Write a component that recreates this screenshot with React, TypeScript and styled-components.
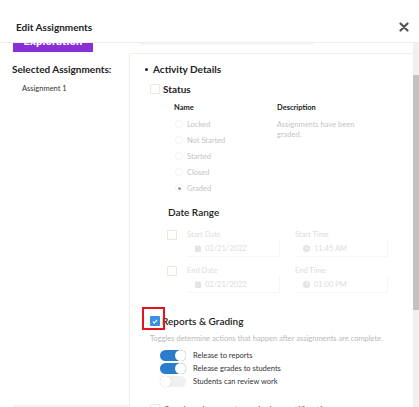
import React from "react";
import styled, { createGlobalStyle } from "styled-components";

const Global = createGlobalStyle`
  html, body { margin: 0; padding: 0; background: #fff; }
  body { font-family: Lato, "Noto Sans", sans-serif; color: #222; }
  * { box-sizing: border-box; }
`;

const Modal = styled.div`
  width: 419px;
  height: 407px;
  display: flex;
  flex-direction: column;
  overflow: hidden;
  background: #fff;
`;

const Header = styled.div`
  height: 43px;
  flex: none;
  display: flex;
  align-items: center;
  justify-content: space-between;
  padding: 0 10px 0 16px;
  border-bottom: 1px solid #f0eee8;
`;

const Title = styled.div`
  font-size: 10px;
  font-weight: 700;
  color: #222;
  padding-top: 12px;
`;

const Close = styled.div`
  width: 10px;
  height: 10px;
  margin-top: 12px;
  display: flex;
`;

const Body = styled.div`
  flex: 1;
  min-height: 0;
  display: flex;
`;

const Main = styled.div`
  flex: 1;
  display: flex;
  flex-direction: column;
  min-width: 0;
`;

const Strip = styled.div`
  height: 10px;
  flex: none;
  display: flex;
  align-items: flex-start;
  gap: 47px;
`;

const Tag = styled.div`
  margin-left: 13px;
  width: 80px;
  height: 9px;
  background: #8a2fd6;
  overflow: hidden;
  display: flex;
  justify-content: center;
`;

const TagText = styled.span`
  color: #fff;
  font-size: 11px;
  font-weight: 900;
  line-height: 11px;
  margin-top: -8px;
  letter-spacing: 0.2px;
`;

const FaintBar = styled.div`
  width: 173px;
  height: 2px;
  background: #f4f4f4;
`;

const Columns = styled.div`
  flex: 1;
  display: flex;
  min-height: 0;
`;

const Left = styled.div`
  width: 130px;
  flex: none;
  display: flex;
  flex-direction: column;
  border-right: 1px solid #f1eee6;
  padding: 10px 0 0 12px;
`;

const SideTitle = styled.div`
  font-size: 10px;
  font-weight: 700;
  color: #222;
`;

const SideItem = styled.div`
  font-size: 7.5px;
  color: #333;
  margin: 9px 0 0 10px;
`;

const Spacer = styled.div`
  flex: 1;
`;

const Rule = styled.div`
  height: 2px;
  background: #f2f2f2;
  margin-left: 1px;
`;

const Right = styled.div`
  flex: 1;
  border-top: 1px solid #f1eee6;
  padding: 8px 0 0 15px;
  display: flex;
  flex-direction: column;
  overflow: hidden;
  & > * {
    flex-shrink: 0;
  }
`;

const Bullet = styled.div`
  display: flex;
  align-items: center;
  gap: 5px;
  font-size: 10px;
  font-weight: 700;
  height: 14px;
  &::before {
    content: "";
    width: 3px;
    height: 3px;
    border-radius: 50%;
    background: #222;
  }
`;

const CheckRow = styled.div<{ $indent: number; $top: number }>`
  display: flex;
  align-items: center;
  gap: 3px;
  margin: ${(p) => p.$top}px 0 0 ${(p) => p.$indent}px;
  height: 14px;
  font-size: 10px;
  font-weight: 700;
`;

const Box = styled.div`
  width: 10px;
  height: 10px;
  border: 1px solid #ece9dd;
  border-radius: 1px;
  flex: none;
  background: #fff;
`;

const Grid = styled.div`
  display: grid;
  grid-template-columns: 103px 1fr;
  margin: 4px 0 0 29px;
`;

const ColHead = styled.div`
  font-size: 7.5px;
  font-weight: 700;
  color: #222;
  height: 14px;
  display: flex;
  align-items: center;
`;

const RadioList = styled.div`
  display: flex;
  flex-direction: column;
  margin-top: 2px;
`;

const RadioRow = styled.div`
  height: 16px;
  display: flex;
  align-items: center;
  gap: 4px;
  font-size: 7.5px;
  color: #c4c4c4;
`;

const Radio = styled.div<{ $on?: boolean }>`
  width: 8px;
  height: 8px;
  border-radius: 50%;
  border: 1px solid #f3f3f3;
  margin-left: 1px;
  display: flex;
  align-items: center;
  justify-content: center;
  &::after {
    content: "";
    width: 3px;
    height: 3px;
    border-radius: 50%;
    background: ${(p) => (p.$on ? "#999" : "transparent")};
  }
`;

const Desc = styled.div`
  font-size: 7.5px;
  color: #c4c4c4;
  line-height: 10px;
  margin-top: 6px;
  width: 90px;
`;

const SubHead = styled.div`
  font-size: 10px;
  font-weight: 600;
  color: #222;
  margin: 9px 0 0 23px;
  height: 14px;
  display: flex;
  align-items: center;
`;

const DateRow = styled.div<{ $top: number }>`
  display: flex;
  align-items: flex-start;
  margin: ${(p) => p.$top}px 0 0 22px;
`;

const DateBox = styled(Box)`
  margin-top: 1px;
  border-color: #ece8d6;
`;

const Field = styled.div<{ $w: number; $gap: number }>`
  width: ${(p) => p.$w}px;
  margin-left: ${(p) => p.$gap}px;
  display: flex;
  flex-direction: column;
`;

const FieldLabel = styled.div`
  font-size: 7.5px;
  color: #dcdcdc;
  height: 10px;
  display: flex;
  align-items: center;
`;

const Input = styled.div`
  height: 17px;
  margin-top: 1px;
  border-bottom: 1px solid #f6f6f6;
  border-right: 1px solid #f6f6f6;
  display: flex;
  align-items: center;
  gap: 4px;
  padding-left: 8px;
  font-size: 7.5px;
  color: #dcdcdc;
`;

const ReportsRow = styled.div`
  position: relative;
  display: flex;
  align-items: center;
  gap: 2px;
  margin: 21px 0 0 5px;
  height: 14px;
  font-size: 10px;
  font-weight: 600;
  color: #222;
`;

const BlueBox = styled.div`
  width: 10px;
  height: 10px;
  border-radius: 1px;
  background: #3b8fe4;
  display: flex;
  align-items: center;
  justify-content: center;
  flex: none;
`;

const Highlight = styled.div`
  position: absolute;
  left: -8px;
  top: -7px;
  width: 23px;
  height: 23px;
  border: 2px solid #e3141c;
`;

const Hint = styled.div`
  font-size: 7.5px;
  color: #b9b9b9;
  margin: 3px 0 0 5px;
  height: 14px;
  display: flex;
  align-items: center;
`;

const ToggleList = styled.div`
  display: flex;
  flex-direction: column;
  margin: 4px 0 0 15px;
`;

const ToggleRow = styled.div`
  height: 13px;
  display: flex;
  align-items: center;
  gap: 7px;
  font-size: 7.5px;
  color: #333;
`;

const Track = styled.div<{ $on: boolean }>`
  width: 26px;
  height: 11px;
  border-radius: 6px;
  background: ${(p) => (p.$on ? "#2a7ccc" : "#f0f0f0")};
  display: flex;
  align-items: center;
  justify-content: ${(p) => (p.$on ? "flex-end" : "flex-start")};
  &::after {
    content: "";
    width: 11px;
    height: 11px;
    border-radius: 50%;
    background: #fff;
    box-shadow: 0 0 1px rgba(0, 0, 0, 0.25);
  }
`;

const CutRow = styled.div`
  display: flex;
  align-items: center;
  gap: 4px;
  margin: 14px 0 0 5px;
  height: 14px;
  font-size: 10px;
  font-weight: 600;
  color: #777;
`;

const Scroll = styled.div`
  width: 6px;
  flex: none;
  background: #f1f1f1;
  display: flex;
  flex-direction: column;
`;

const Thumb = styled.div`
  margin-top: 32px;
  height: 235px;
  background: #c2c2c2;
`;

const Calendar = () => (
  <svg width="6" height="7" viewBox="0 0 6 7">
    <rect x="0" y="1" width="6" height="6" rx="0.5" fill="#e4e4e4" />
    <rect x="1" y="0" width="1" height="2" fill="#e4e4e4" />
    <rect x="4" y="0" width="1" height="2" fill="#e4e4e4" />
  </svg>
);

const Clock = () => (
  <svg width="7" height="7" viewBox="0 0 7 7">
    <circle cx="3.5" cy="3.5" r="3.5" fill="#e4e4e4" />
    <path d="M3.5 1.6V3.6H5" stroke="#fff" strokeWidth="0.8" fill="none" />
  </svg>
);

const statuses = ["Locked", "Not Started", "Started", "Closed", "Graded"];
const toggles: [string, boolean][] = [
  ["Release to reports", true],
  ["Release grades to students", true],
  ["Students can review work", false],
];

export default function App() {
  return (
    <Modal>
      <Global />
      <Header>
        <Title>Edit Assignments</Title>
        <Close>
          <svg width="10" height="10" viewBox="0 0 10 10">
            <path d="M1.5 1.5L8.5 8.5M8.5 1.5L1.5 8.5" stroke="#555" strokeWidth="2.2" strokeLinecap="round" />
          </svg>
        </Close>
      </Header>
      <Body>
        <Main>
          <Strip>
            <Tag>
              <TagText>Exploration</TagText>
            </Tag>
            <FaintBar />
          </Strip>
          <Columns>
            <Left>
              <SideTitle>Selected Assignments:</SideTitle>
              <SideItem>Assignment 1</SideItem>
              <Spacer />
              <Rule />
            </Left>
            <Right>
              <Bullet>Activity Details</Bullet>
              <CheckRow $indent={5} $top={6}>
                <Box />
                Status
              </CheckRow>
              <Grid>
                <ColHead>Name</ColHead>
                <ColHead>Description</ColHead>
                <RadioList>
                  {statuses.map((s) => (
                    <RadioRow key={s}>
                      <Radio $on={s === "Graded"} />
                      {s}
                    </RadioRow>
                  ))}
                </RadioList>
                <Desc>Assignments have been graded.</Desc>
              </Grid>
              <SubHead>Date Range</SubHead>
              <DateRow $top={10}>
                <DateBox />
                <Field $w={93} $gap={10}>
                  <FieldLabel>Start Date</FieldLabel>
                  <Input>
                    <Calendar />
                    02/21/2022
                  </Input>
                </Field>
                <Field $w={93} $gap={15}>
                  <FieldLabel>Start Time</FieldLabel>
                  <Input>
                    <Clock />
                    11:45 AM
                  </Input>
                </Field>
              </DateRow>
              <DateRow $top={8}>
                <DateBox />
                <Field $w={93} $gap={10}>
                  <FieldLabel>End Date</FieldLabel>
                  <Input>
                    <Calendar />
                    02/21/2022
                  </Input>
                </Field>
                <Field $w={93} $gap={15}>
                  <FieldLabel>End Time</FieldLabel>
                  <Input>
                    <Clock />
                    01:00 PM
                  </Input>
                </Field>
              </DateRow>
              <ReportsRow>
                <BlueBox>
                  <svg width="6" height="5" viewBox="0 0 6 5">
                    <path d="M0.8 2.6L2.3 4L5.2 0.9" stroke="#fff" strokeWidth="1.1" fill="none" />
                  </svg>
                </BlueBox>
                Reports &amp; Grading
                <Highlight />
              </ReportsRow>
              <Hint>Toggles determine actions that happen after assignments are complete.</Hint>
              <ToggleList>
                {toggles.map(([label, on]) => (
                  <ToggleRow key={label}>
                    <Track $on={on} />
                    {label}
                  </ToggleRow>
                ))}
              </ToggleList>
              <CutRow>
                <Box />
                Send assignment reminder notifications
              </CutRow>
            </Right>
          </Columns>
        </Main>
        <Scroll>
          <Thumb />
        </Scroll>
      </Body>
    </Modal>
  );
}
